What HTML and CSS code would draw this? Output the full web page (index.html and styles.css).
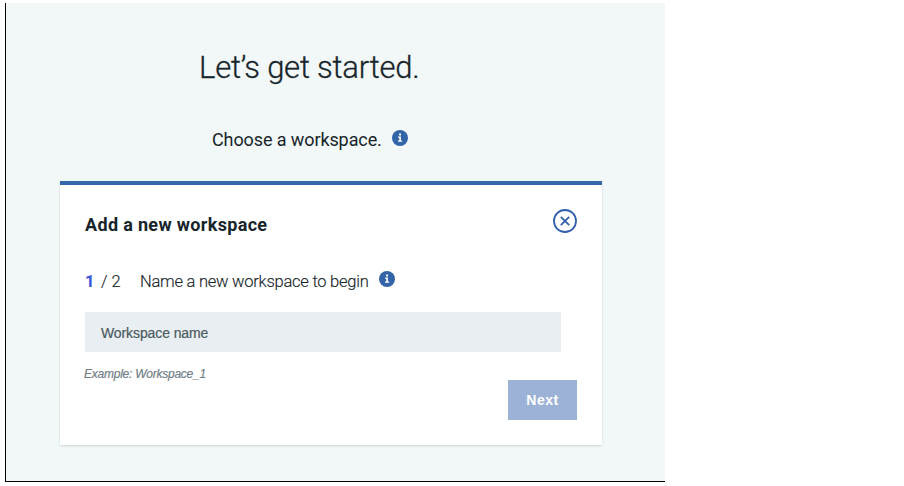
FILE: index.html
```html
<!DOCTYPE html>
<html lang="en">
<head>
<meta charset="utf-8">
<title>Choose a workspace</title>
<link rel="stylesheet" href="styles.css">
</head>
<body>
<main class="panel">
  <h1 class="title">Let’s get started.</h1>
  <div class="choose">
    <span class="choose-text">Choose a workspace.</span>
    <svg class="info" viewBox="0 0 16 16"><circle cx="8" cy="8" r="8" fill="#3364a8"/><path d="M7.1 3.5h1.9v1.9H7.1zM6.1 6.6h2.8v4h1.2v1.2H6v-1.2h1.3V7.8H6.1z" fill="#fff"/></svg>
  </div>
  <section class="card">
    <header class="card-head">
      <h2 class="card-title">Add a new workspace</h2>
      <svg class="close" viewBox="0 0 24 24" fill="none" stroke="#315fab" stroke-width="1.8"><circle cx="12" cy="12" r="11"/><path d="M7.8 7.8l8.4 8.4M16.2 7.8l-8.4 8.4"/></svg>
    </header>
    <div class="step">
      <span class="current">1</span><span class="total">/ 2</span>
      <span class="step-text">Name a new workspace to begin</span>
      <svg class="info" viewBox="0 0 16 16"><circle cx="8" cy="8" r="8" fill="#3364a8"/><path d="M7.1 3.5h1.9v1.9H7.1zM6.1 6.6h2.8v4h1.2v1.2H6v-1.2h1.3V7.8H6.1z" fill="#fff"/></svg>
    </div>
    <div class="field"><span class="field-text">Workspace name</span></div>
    <footer class="card-foot">
      <span class="example">Example: Workspace_1</span>
      <button class="next">Next</button>
    </footer>
  </section>
</main>
</body>
</html>
```
FILE: styles.css
```css
* { box-sizing: border-box; }
body { margin: 0; background: #fff; color: #17252b; font-family: "Roboto", "Liberation Sans", sans-serif; }
h1, h2 { margin: 0; }
.panel { width: 660px; height: 479px; margin: 3px 0 0 5px; background: #f2f7f7; border-left: 1px solid #000; border-bottom: 1px solid #000; overflow: hidden; }
.title { margin: 45px 0 0 193px; font-size: 31px; line-height: 40px; font-weight: 300; letter-spacing: -0.22px; white-space: nowrap; -webkit-text-stroke: 0.3px #17252b; }
.choose { display: flex; height: 24px; margin: 39px 0 0 206px; }
.choose-text { width: 180px; font-size: 18px; line-height: 26px; white-space: nowrap; letter-spacing: -0.1px; }
.info { width: 16px; height: 16px; flex: none; }
.choose .info { margin-top: 3px; }
.card { width: 542px; height: 264px; margin: 30px 0 0 54px; padding: 24px 25px 25px; background: #fff; border-top: 4px solid #3466a9; box-shadow: 0 1px 2px rgba(30, 50, 60, 0.16); }
.card-head { display: flex; justify-content: space-between; height: 24px; }
.card-title { font-size: 18px; line-height: 32px; font-weight: 700; letter-spacing: 0.33px; white-space: nowrap; }
.close { width: 24px; height: 24px; }
.step { display: flex; height: 24px; margin-top: 36px; font-size: 16.5px; line-height: 26px; font-weight: 300; white-space: nowrap; -webkit-text-stroke: 0.15px; }
.current { width: 16px; color: #4059dc; font-weight: 700; }
.total { width: 39px; }
.step-text { width: 239px; letter-spacing: -0.24px; }
.step .info { margin-top: 2px; }
.field { width: 476px; height: 40px; margin-top: 19px; padding-left: 16px; background: #e8eef2; color: #4b5a60; font: 14px/42px "Liberation Sans", sans-serif; letter-spacing: -0.1px; -webkit-text-stroke: 0.2px; }
.card-foot { display: flex; justify-content: space-between; }
.example { margin: 14px 0 0 -1px; color: #717e87; font: italic 12px/16px "Liberation Sans", sans-serif; letter-spacing: -0.24px; white-space: nowrap; -webkit-text-stroke: 0.2px; }
.next { width: 69px; height: 40px; margin-top: 28px; padding: 0; border: 0; background: #9bb1d5; color: #fff; font: bold 14px/40px "Liberation Sans", sans-serif; letter-spacing: 0.5px; }
```
